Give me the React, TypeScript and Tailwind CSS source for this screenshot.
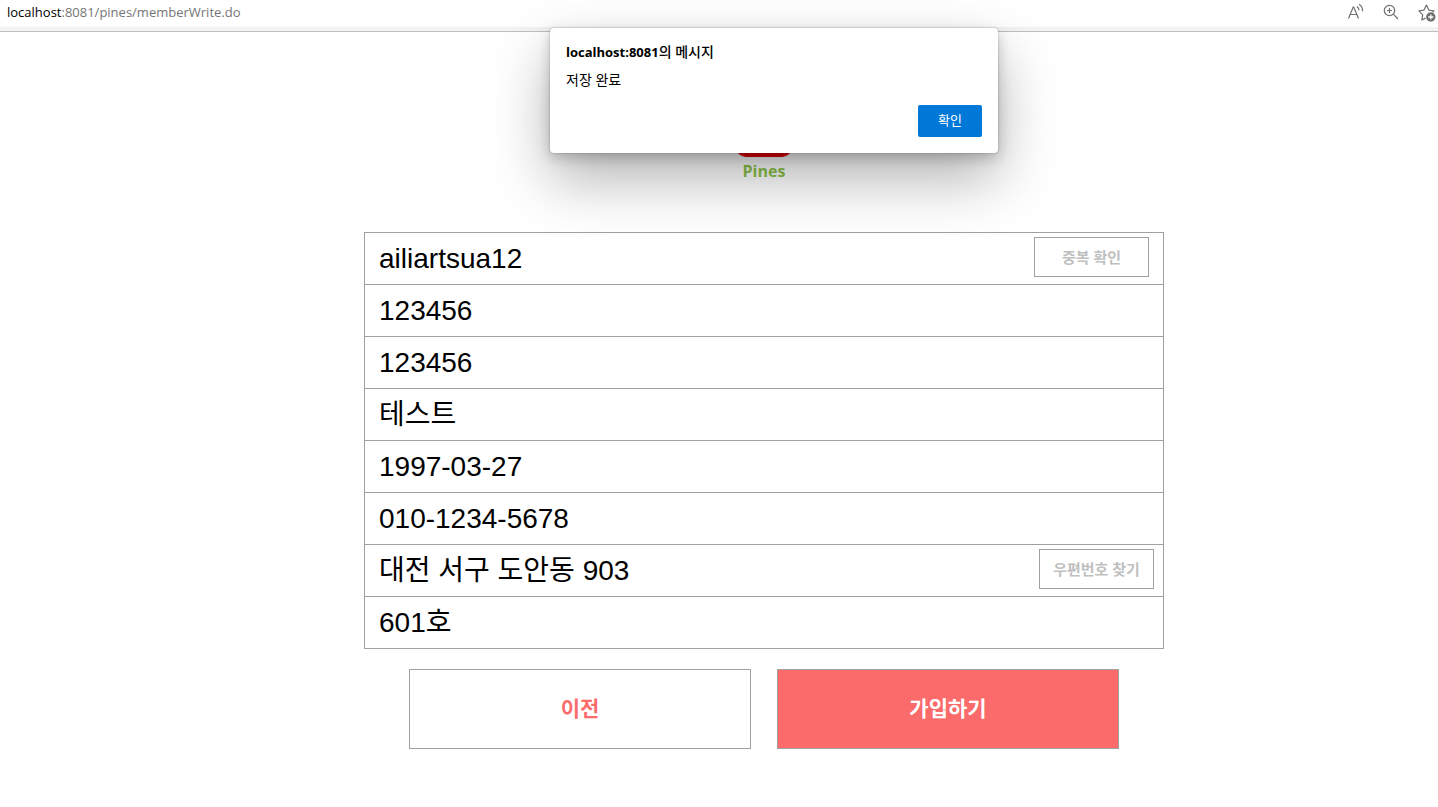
import { clsx } from "clsx";

type Field = {
  id: string;
  label: string;
  value: string;
  action?: string;
  actionClass?: string;
};

const fields: Field[] = [
  {
    id: "memberId",
    label: "아이디",
    value: "ailiartsua12",
    action: "중복 확인",
    actionClass: "mr-3.5",
  },
  { id: "password", label: "비밀번호", value: "123456" },
  { id: "passwordCheck", label: "비밀번호 확인", value: "123456" },
  { id: "name", label: "이름", value: "테스트" },
  { id: "birth", label: "생년월일", value: "1997-03-27" },
  { id: "phone", label: "전화번호", value: "010-1234-5678" },
  {
    id: "address",
    label: "주소",
    value: "대전 서구 도안동 903",
    action: "우편번호 찾기",
    actionClass: "mr-[9px]",
  },
  { id: "addressDetail", label: "상세주소", value: "601호" },
];

const ReadAloudIcon = () => (
  <svg
    width="18"
    height="18"
    viewBox="0 0 18 18"
    fill="none"
    stroke="currentColor"
    strokeWidth="1.2"
  >
    <path d="M1.5 15.5 6.2 4h.6l4.7 11.5M3.2 11.5h6.6" />
    <path d="M10 3.4c1.2.9 1.9 2.2 2 3.8M12 1.3c2.6 1.6 3.8 3.8 3.5 6.9" />
  </svg>
);

const ZoomInIcon = () => (
  <svg
    width="18"
    height="18"
    viewBox="0 0 18 18"
    fill="none"
    stroke="currentColor"
    strokeWidth="1.2"
  >
    <circle cx="7.5" cy="7.5" r="5.2" />
    <path d="M7.5 5v5M5 7.5h5M11.2 11.2l4.8 4.8" />
  </svg>
);

const FavoriteIcon = () => (
  <svg
    width="20"
    height="20"
    viewBox="0 0 20 20"
    fill="none"
    stroke="currentColor"
    strokeWidth="1.2"
  >
    <path
      d="M8.6 16.1 4.8 18l.9-5.2-3.9-3.9 5.2-.8L9.4 3l2.4 5.1 5.2.8-1.3 1.4"
      strokeLinejoin="round"
    />
    <circle cx="13.8" cy="15" r="4.7" fill="currentColor" stroke="none" />
    <path d="M13.8 12.4v5.2M11.2 15h5.2" stroke="#fff" strokeWidth="1.3" />
  </svg>
);

const AddressBar = () => (
  <header className="border-b border-[#bfbfbf] bg-[#f3f3f3] pb-1">
    <div className="flex h-[27px] items-center justify-between bg-white pb-1 pl-[7px] pr-px">
      <p className="text-[13px] leading-5 text-[#757575]">
        <span className="text-black">localhost</span>:8081/pines/memberWrite.do
      </p>
      <div className="flex items-center gap-[17px] text-[#707070]">
        <button type="button" aria-label="소리내어 읽기">
          <ReadAloudIcon />
        </button>
        <button type="button" aria-label="확대">
          <ZoomInIcon />
        </button>
        <button type="button" aria-label="즐겨찾기에 추가">
          <FavoriteIcon />
        </button>
      </div>
    </div>
  </header>
);

const AlertDialog = () => (
  <div className="pointer-events-none absolute inset-x-0 top-7 flex justify-center pl-[110px]">
    <div
      role="alertdialog"
      aria-labelledby="alert-title"
      aria-describedby="alert-message"
      className="pointer-events-auto flex w-full max-w-[448px] flex-col rounded-sm bg-white px-4 pt-[15px] pb-4 shadow-[0_0_2px_rgba(0,0,0,0.3),0_5px_14px_rgba(0,0,0,0.2),0_26px_58px_rgba(0,0,0,0.3)]"
    >
      <h2 id="alert-title" className="text-[13px] leading-[18px] font-bold">
        localhost:8081<span className="text-sm leading-[18px] font-medium">의 메시지</span>
      </h2>
      <p id="alert-message" className="mt-2.5 text-sm leading-[18px]">
        저장 완료
      </p>
      <button
        type="button"
        className="mt-4 h-8 w-16 self-end rounded-xs bg-[#0078d7] text-[13px] text-white"
      >
        확인
      </button>
    </div>
  </div>
);

const Logo = () => (
  <div className="flex flex-col items-center">
    <svg width="58" height="62" viewBox="0 0 58 62">
      <rect x="1" y="2" width="56" height="60" rx="10" fill="#e60000" />
    </svg>
    <span className="mt-1 text-base leading-5 font-bold text-[#8bc34a]">Pines</span>
  </div>
);

const FieldRow = ({ id, label, value, action, actionClass }: Field) => (
  <div className="flex h-[52px] border-b border-[#a0a0a0]">
    <input
      id={id}
      name={id}
      type="text"
      aria-label={label}
      defaultValue={value}
      className="min-w-0 flex-1 pl-3.5 font-['Liberation_Sans','Noto_Sans_CJK_KR',sans-serif] text-[28px] text-black outline-none"
    />
    {action && (
      <button
        type="button"
        className={clsx(
          "mt-1 h-10 w-[115px] shrink-0 border border-[#a0a0a0] text-[15px] font-bold text-[#c0c0c0]",
          actionClass
        )}
      >
        {action}
      </button>
    )}
  </div>
);

export default function App() {
  return (
    <div className="relative min-h-screen bg-white font-['Open_Sans','Noto_Sans_CJK_KR',sans-serif] text-black">
      <AddressBar />
      <main className="flex flex-col items-center pt-[63px] pl-[90px]">
        <Logo />
        <form className="mt-[51px] w-full max-w-[800px]">
          <div className="border-x border-t border-[#a0a0a0]">
            {fields.map((field) => (
              <FieldRow key={field.id} {...field} />
            ))}
          </div>
          <div className="mt-5 flex gap-[26px] px-[45px] text-[21px] font-bold">
            <button
              type="button"
              className="h-20 flex-1 border border-[#a0a0a0] bg-white text-[#fc6b6b]"
            >
              이전
            </button>
            <button
              type="submit"
              className="h-20 flex-1 border border-[#a0a0a0] bg-[#fc6b6b] text-white"
            >
              가입하기
            </button>
          </div>
        </form>
      </main>
      <AlertDialog />
    </div>
  );
}
